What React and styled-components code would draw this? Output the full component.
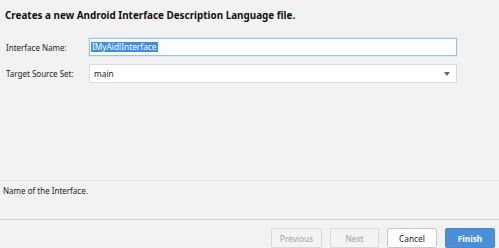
import React from "react";
import styled, { createGlobalStyle } from "styled-components";

const Global = createGlobalStyle`
  html, body { margin: 0; padding: 0; background: #f2f2f2; }
  body { font-family: "Noto Sans", "Open Sans", sans-serif; }
`;

const Dialog = styled.div`
  width: 499px;
  height: 248px;
  display: flex;
  flex-direction: column;
  background: #f2f2f2;
  overflow: hidden;
  color: #1e1e1e;
`;

const Title = styled.div`
  padding: 8px 0 0 5px;
  height: 23px;
  font-size: 9.9px;
  font-weight: 700;
  line-height: 14px;
  color: #111;
`;

const Form = styled.div`
  display: grid;
  grid-template-columns: 83px 368px;
  row-gap: 8px;
  padding: 7px 0 0 6px;
  align-items: center;
`;

const Label = styled.label`
  font-size: 8px;
  color: #1e1e1e;
`;

const TextField = styled.div`
  height: 18px;
  box-sizing: border-box;
  border: 1px solid #9fc0e2;
  background: #fdfeff;
  box-shadow: 0 0 0 1px #dbe8f5;
  display: flex;
  align-items: center;
  padding-left: 1px;
`;

const Selected = styled.span`
  background: #3f8fe0;
  color: #fff;
  font-size: 8.3px;
  line-height: 10px;
  padding: 0 2px 0 1px;
`;

const Combo = styled.div`
  height: 19px;
  box-sizing: border-box;
  border: 1px solid #dadada;
  background: #fff;
  display: flex;
  align-items: center;
  justify-content: space-between;
  padding: 0 6px 0 4px;
  font-size: 8.3px;
  color: #1e1e1e;
`;

const Arrow = styled.svg`
  width: 6px;
  height: 4px;
`;

const Spacer = styled.div`
  flex: 1;
`;

const Help = styled.div`
  height: 40px;
  box-sizing: border-box;
  border-top: 1px solid #e2e2e2;
  border-bottom: 1px solid #d2d2d2;
  padding: 4px 0 0 3px;
  font-size: 8px;
  color: #1e1e1e;
`;

const Footer = styled.div`
  height: 28px;
  display: flex;
  justify-content: flex-end;
  align-items: flex-start;
  gap: 8px;
  padding: 8px 4px 0 0;
  box-sizing: border-box;
`;

const Button = styled.button`
  width: ${(p) => p.$w}px;
  height: 20px;
  box-sizing: border-box;
  font-family: inherit;
  font-size: 8.3px;
  padding: 0;
  border-radius: 2px;
  border: 1px solid ${(p) => (p.$primary ? "#4a8ad4" : p.disabled ? "#dadada" : "#c9c9c9")};
  background: ${(p) => (p.$primary ? "#4b8fdb" : p.disabled ? "#f3f3f3" : "#ffffff")};
  color: ${(p) => (p.$primary ? "#ffffff" : p.disabled ? "#a2a2a2" : "#1e1e1e")};
  font-weight: ${(p) => (p.$primary ? 700 : 400)};
`;

export default function App() {
  return (
    <Dialog>
      <Global />
      <Title>Creates a new Android Interface Description Language file.</Title>
      <Form>
        <Label>Interface Name:</Label>
        <TextField>
          <Selected>IMyAidlInterface</Selected>
        </TextField>
        <Label>Target Source Set:</Label>
        <Combo>
          <span>main</span>
          <Arrow viewBox="0 0 6 4">
            <path d="M0 0 L6 0 L3 4 Z" fill="#666" />
          </Arrow>
        </Combo>
      </Form>
      <Spacer />
      <Help>Name of the Interface.</Help>
      <Footer>
        <Button $w={51} disabled>Previous</Button>
        <Button $w={49} disabled>Next</Button>
        <Button $w={50}>Cancel</Button>
        <Button $w={50} $primary>Finish</Button>
      </Footer>
    </Dialog>
  );
}
